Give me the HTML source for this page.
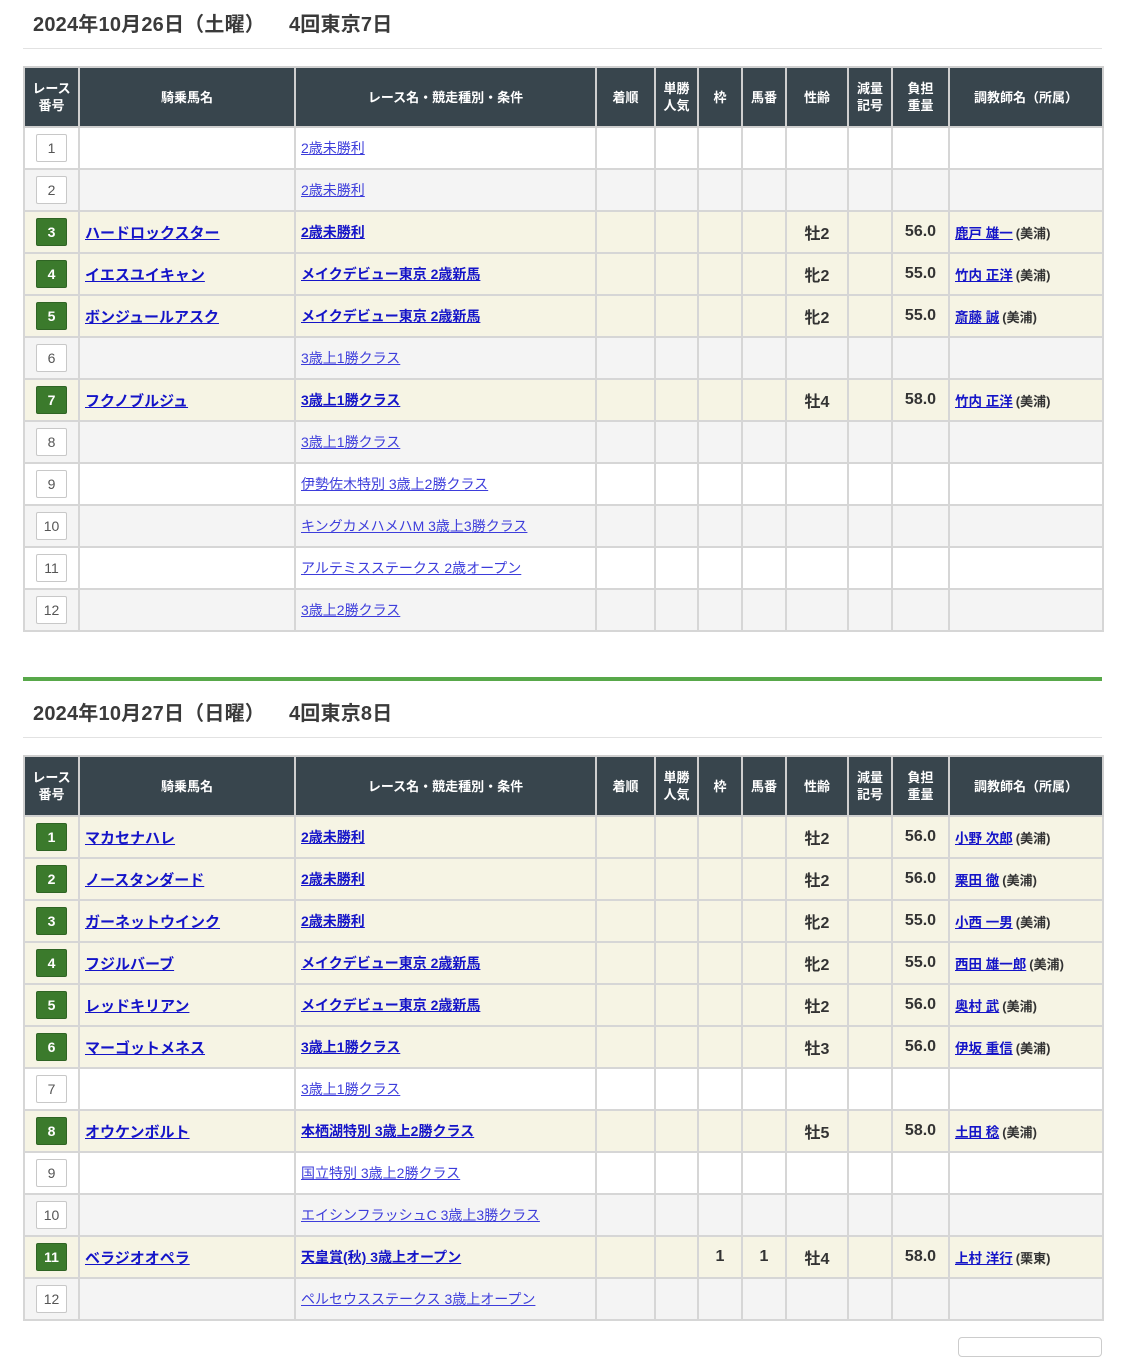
<!DOCTYPE html>
<html><head><meta charset="utf-8">
<style>
*{margin:0;padding:0;box-sizing:border-box}
body{width:1125px;height:1344px;background:#fff;font-family:"Liberation Sans","Noto Sans CJK JP",sans-serif;position:relative;overflow:hidden;color:#333}
.title{position:absolute;left:33px;font-size:20px;font-weight:bold;color:#3a3a3a;letter-spacing:0.2px}
.title span{margin-left:24px}
.hr{position:absolute;left:23px;width:1079px;height:1px;background:#e2e2e2}
.green{position:absolute;left:23px;width:1079px;height:4px;background:#58a84a}
table{position:absolute;left:23px;width:1079px;border-collapse:collapse;table-layout:fixed;border:2px solid #cfcfcf}
th{background:#38454d;color:#fff;font-size:13px;font-weight:bold;height:60px;border:2px solid #cfcfcf;line-height:17px;text-align:center}
td{height:42px;border:2px solid #d6d6d6;font-size:14.5px;text-align:center;padding:0 5px}
tr.w td{background:#fff}
tr.g td{background:#f4f4f4}
tr.y td{background:#f6f4e4}
td.l{text-align:left}
.n{display:inline-block;width:31px;height:28px;line-height:26px;border:1px solid #c8c8c8;border-radius:2px;background:#fff;color:#555;font-size:14px;text-align:center}
.n.a{background:#3b7a2c;border-color:#2f6424;color:#fff;font-weight:bold}
a{color:#3d3ddb;text-decoration:underline;font-size:14px}
a.b{color:#1414c8;font-weight:bold;font-size:15px}
a.r{color:#1414c8;font-weight:bold;font-size:14px}
a.k{color:#1414c8;font-weight:bold;font-size:13.5px}
.s{font-weight:bold;font-size:16px;color:#333}
.t{font-size:13px;font-weight:bold;color:#333;margin-left:3px}
</style></head><body>

<div class="title" style="top:8px">2024年10月26日（土曜）<span>4回東京7日</span></div>
<div class="hr" style="top:48px"></div>

<table style="top:66px">
<colgroup><col style="width:55px"><col style="width:216px"><col style="width:301px"><col style="width:59px"><col style="width:43px"><col style="width:44px"><col style="width:44px"><col style="width:62px"><col style="width:44px"><col style="width:57px"><col style="width:154px"></colgroup>
<tr><th>レース<br>番号</th><th>騎乗馬名</th><th>レース名・競走種別・条件</th><th>着順</th><th>単勝<br>人気</th><th>枠</th><th>馬番</th><th>性齢</th><th>減量<br>記号</th><th>負担<br>重量</th><th>調教師名（所属）</th></tr>
<tr class="w"><td><span class="n">1</span></td><td></td><td class="l"><a>2歳未勝利</a></td><td></td><td></td><td></td><td></td><td></td><td></td><td></td><td></td></tr>
<tr class="g"><td><span class="n">2</span></td><td></td><td class="l"><a>2歳未勝利</a></td><td></td><td></td><td></td><td></td><td></td><td></td><td></td><td></td></tr>
<tr class="y"><td><span class="n a">3</span></td><td class="l"><a class="b">ハードロックスター</a></td><td class="l"><a class="r">2歳未勝利</a></td><td></td><td></td><td></td><td></td><td class="s">牡2</td><td></td><td class="s">56.0</td><td class="l"><a class="k">鹿戸 雄一</a><span class="t">(美浦)</span></td></tr>
<tr class="y"><td><span class="n a">4</span></td><td class="l"><a class="b">イエスユイキャン</a></td><td class="l"><a class="r">メイクデビュー東京 2歳新馬</a></td><td></td><td></td><td></td><td></td><td class="s">牝2</td><td></td><td class="s">55.0</td><td class="l"><a class="k">竹内 正洋</a><span class="t">(美浦)</span></td></tr>
<tr class="y"><td><span class="n a">5</span></td><td class="l"><a class="b">ボンジュールアスク</a></td><td class="l"><a class="r">メイクデビュー東京 2歳新馬</a></td><td></td><td></td><td></td><td></td><td class="s">牝2</td><td></td><td class="s">55.0</td><td class="l"><a class="k">斎藤 誠</a><span class="t">(美浦)</span></td></tr>
<tr class="g"><td><span class="n">6</span></td><td></td><td class="l"><a>3歳上1勝クラス</a></td><td></td><td></td><td></td><td></td><td></td><td></td><td></td><td></td></tr>
<tr class="y"><td><span class="n a">7</span></td><td class="l"><a class="b">フクノブルジュ</a></td><td class="l"><a class="r">3歳上1勝クラス</a></td><td></td><td></td><td></td><td></td><td class="s">牡4</td><td></td><td class="s">58.0</td><td class="l"><a class="k">竹内 正洋</a><span class="t">(美浦)</span></td></tr>
<tr class="g"><td><span class="n">8</span></td><td></td><td class="l"><a>3歳上1勝クラス</a></td><td></td><td></td><td></td><td></td><td></td><td></td><td></td><td></td></tr>
<tr class="w"><td><span class="n">9</span></td><td></td><td class="l"><a>伊勢佐木特別 3歳上2勝クラス</a></td><td></td><td></td><td></td><td></td><td></td><td></td><td></td><td></td></tr>
<tr class="g"><td><span class="n">10</span></td><td></td><td class="l"><a>キングカメハメハM 3歳上3勝クラス</a></td><td></td><td></td><td></td><td></td><td></td><td></td><td></td><td></td></tr>
<tr class="w"><td><span class="n">11</span></td><td></td><td class="l"><a>アルテミスステークス 2歳オープン</a></td><td></td><td></td><td></td><td></td><td></td><td></td><td></td><td></td></tr>
<tr class="g"><td><span class="n">12</span></td><td></td><td class="l"><a>3歳上2勝クラス</a></td><td></td><td></td><td></td><td></td><td></td><td></td><td></td><td></td></tr>
</table>

<div class="green" style="top:677px"></div>
<div class="title" style="top:697px">2024年10月27日（日曜）<span>4回東京8日</span></div>
<div class="hr" style="top:737px"></div>

<table style="top:755px">
<colgroup><col style="width:55px"><col style="width:216px"><col style="width:301px"><col style="width:59px"><col style="width:43px"><col style="width:44px"><col style="width:44px"><col style="width:62px"><col style="width:44px"><col style="width:57px"><col style="width:154px"></colgroup>
<tr><th>レース<br>番号</th><th>騎乗馬名</th><th>レース名・競走種別・条件</th><th>着順</th><th>単勝<br>人気</th><th>枠</th><th>馬番</th><th>性齢</th><th>減量<br>記号</th><th>負担<br>重量</th><th>調教師名（所属）</th></tr>
<tr class="y"><td><span class="n a">1</span></td><td class="l"><a class="b">マカセナハレ</a></td><td class="l"><a class="r">2歳未勝利</a></td><td></td><td></td><td></td><td></td><td class="s">牡2</td><td></td><td class="s">56.0</td><td class="l"><a class="k">小野 次郎</a><span class="t">(美浦)</span></td></tr>
<tr class="y"><td><span class="n a">2</span></td><td class="l"><a class="b">ノースタンダード</a></td><td class="l"><a class="r">2歳未勝利</a></td><td></td><td></td><td></td><td></td><td class="s">牡2</td><td></td><td class="s">56.0</td><td class="l"><a class="k">栗田 徹</a><span class="t">(美浦)</span></td></tr>
<tr class="y"><td><span class="n a">3</span></td><td class="l"><a class="b">ガーネットウインク</a></td><td class="l"><a class="r">2歳未勝利</a></td><td></td><td></td><td></td><td></td><td class="s">牝2</td><td></td><td class="s">55.0</td><td class="l"><a class="k">小西 一男</a><span class="t">(美浦)</span></td></tr>
<tr class="y"><td><span class="n a">4</span></td><td class="l"><a class="b">フジルバーブ</a></td><td class="l"><a class="r">メイクデビュー東京 2歳新馬</a></td><td></td><td></td><td></td><td></td><td class="s">牝2</td><td></td><td class="s">55.0</td><td class="l"><a class="k">西田 雄一郎</a><span class="t">(美浦)</span></td></tr>
<tr class="y"><td><span class="n a">5</span></td><td class="l"><a class="b">レッドキリアン</a></td><td class="l"><a class="r">メイクデビュー東京 2歳新馬</a></td><td></td><td></td><td></td><td></td><td class="s">牡2</td><td></td><td class="s">56.0</td><td class="l"><a class="k">奥村 武</a><span class="t">(美浦)</span></td></tr>
<tr class="y"><td><span class="n a">6</span></td><td class="l"><a class="b">マーゴットメネス</a></td><td class="l"><a class="r">3歳上1勝クラス</a></td><td></td><td></td><td></td><td></td><td class="s">牡3</td><td></td><td class="s">56.0</td><td class="l"><a class="k">伊坂 重信</a><span class="t">(美浦)</span></td></tr>
<tr class="w"><td><span class="n">7</span></td><td></td><td class="l"><a>3歳上1勝クラス</a></td><td></td><td></td><td></td><td></td><td></td><td></td><td></td><td></td></tr>
<tr class="y"><td><span class="n a">8</span></td><td class="l"><a class="b">オウケンボルト</a></td><td class="l"><a class="r">本栖湖特別 3歳上2勝クラス</a></td><td></td><td></td><td></td><td></td><td class="s">牡5</td><td></td><td class="s">58.0</td><td class="l"><a class="k">土田 稔</a><span class="t">(美浦)</span></td></tr>
<tr class="w"><td><span class="n">9</span></td><td></td><td class="l"><a>国立特別 3歳上2勝クラス</a></td><td></td><td></td><td></td><td></td><td></td><td></td><td></td><td></td></tr>
<tr class="g"><td><span class="n">10</span></td><td></td><td class="l"><a>エイシンフラッシュC 3歳上3勝クラス</a></td><td></td><td></td><td></td><td></td><td></td><td></td><td></td><td></td></tr>
<tr class="y"><td><span class="n a">11</span></td><td class="l"><a class="b">ベラジオオペラ</a></td><td class="l"><a class="r">天皇賞(秋) 3歳上オープン</a></td><td></td><td></td><td class="s">1</td><td class="s">1</td><td class="s">牡4</td><td></td><td class="s">58.0</td><td class="l"><a class="k">上村 洋行</a><span class="t">(栗東)</span></td></tr>
<tr class="g"><td><span class="n">12</span></td><td></td><td class="l"><a>ペルセウスステークス 3歳上オープン</a></td><td></td><td></td><td></td><td></td><td></td><td></td><td></td><td></td></tr>
</table>

<div style="position:absolute;left:958px;top:1337px;width:144px;height:20px;border:1px solid #ccc;border-radius:4px;background:#fff"></div>
</body></html>
